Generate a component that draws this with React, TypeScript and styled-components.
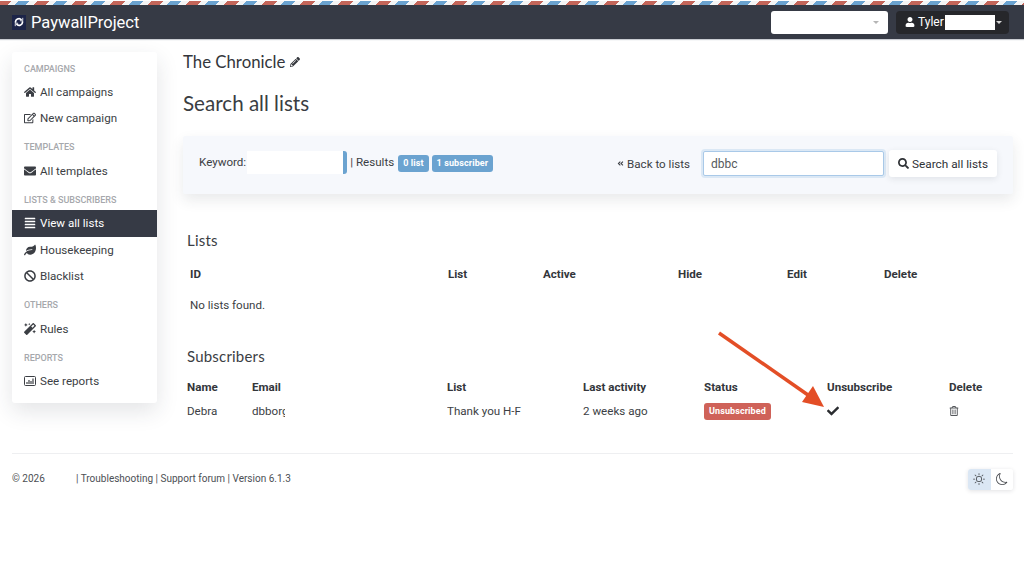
import React from "react";
import styled, { createGlobalStyle } from "styled-components";
import {
  FaHome, FaRegEdit, FaEnvelope, FaAlignJustify, FaLeaf, FaBan, FaMagic,
  FaPencilAlt, FaUser, FaSearch, FaAngleDoubleLeft, FaCheck, FaRegTrashAlt,
} from "react-icons/fa";
import { BsSun, BsMoon } from "react-icons/bs";

const Global = createGlobalStyle`
  html, body { margin: 0; padding: 0; background: #fff; }
  body { font-family: Roboto, "Liberation Sans", sans-serif; font-size: 11.6px; color: #3b3e44; }
`;
const Page = styled.div`
  position: relative; width: 1024px; height: 585px; overflow: hidden;
`;
const Stripe = styled.div`
  height: 4px; border-top: 1px solid #fff;
  background: repeating-linear-gradient(135deg, #c4665a 0 7.8px, #f4f4f4 7.8px 13.4px, #6ba3d0 13.4px 21.2px, #f4f4f4 21.2px 26.87px);
`;
const Header = styled.header`
  height: 34px; background: #363a45; display: flex; align-items: center;
  padding: 0 15px 0 12px; box-shadow: 0 1px 1px #c9ccd2;
`;
const Logo = styled.span`
  width: 14px; height: 15px; background: #1c2448; display: flex; align-items: center; justify-content: center; margin-right: 5px;
`;
const Brand = styled.span`
  color: #fff; font-size: 16.5px; flex: 1;
`;
const BrandSelect = styled.div`
  width: 117px; height: 23px; background: #fff; border-radius: 3px; display: flex; align-items: center; justify-content: flex-end; padding-right: 9px; box-sizing: border-box; margin-right: 8px;
`;
const Caret = styled.span<{ $c: string }>`
  width: 0; height: 0; border-left: 3.5px solid transparent; border-right: 3.5px solid transparent; border-top: 3.5px solid ${p => p.$c};
`;
const UserButton = styled.div`
  width: 113px; height: 23px; background: #26272b; border-radius: 4px; display: flex; align-items: center; padding-left: 9px; box-sizing: border-box; color: #fff; font-size: 12px; gap: 3px;
`;
const UserRedact = styled.span`
  width: 50px; height: 15px; background: #fff; margin-left: -2px; margin-right: -2px;
`;
const Main = styled.div`
  display: flex; align-items: flex-start; padding: 13px 11px 0 12px; gap: 26px; height: 414px; box-sizing: border-box;
`;
const Sidebar = styled.nav`
  width: 145px; flex: none; height: 351px; box-sizing: border-box; padding-top: 11px; background: #fff; border-radius: 3px; box-shadow: 0 8px 22px rgba(40,45,60,.13);
`;
const SideHead = styled.div`
  font-size: 9px; font-weight: 500; color: #a6a8ac; height: 12px; line-height: 12px; padding-left: 12px; margin: 0 0 4.25px; text-transform: uppercase;
  &:first-child { margin-bottom: 3.65px; }
  &:not(:first-child) { margin-top: 9.75px; }
`;
const SideItem = styled.div<{ $active?: boolean }>`
  height: 26.5px; display: flex; align-items: center; gap: 4px; padding-left: 12px; font-size: 11.6px;
  background: ${p => (p.$active ? "#363a45" : "transparent")};
  color: ${p => (p.$active ? "#fff" : "#3b3e44")};
  svg { width: 12px; height: 12px; flex: none; }
`;
const Content = styled.main`
  flex: 1; min-width: 0;
`;
const Title = styled.h1`
  margin: 0; font-family: Lato, sans-serif; font-weight: 400; font-size: 16.8px; line-height: 20px; display: flex; align-items: center; gap: 5px; color: #33363b;
  svg { width: 10px; height: 10px; }
`;
const PageTitle = styled.h2`
  margin: 19px 0 0; font-family: Lato, sans-serif; font-weight: 400; font-size: 20.6px; line-height: 24px; color: #3a3d42;
`;
const Panel = styled.section`
  margin-top: 21px; height: 58px; background: #f6f8fc; border-radius: 2px; box-shadow: 0 6px 14px rgba(40,45,60,.1); display: flex; align-items: center; padding: 0 16px 3px 16px; box-sizing: border-box;
`;
const Label = styled.span`
  font-size: 11.6px; white-space: nowrap; margin-bottom: 4px;
`;
const KeywordBlank = styled.span`
  position: relative; width: 100px; height: 23px; background: #6ba3d0; border-radius: 0 3px 3px 0; margin: 0 3px 2px 1px;
  &::before { content: ""; position: absolute; inset: 0 4px 0 0; background: #fff; }
`;
const Badge = styled.span<{ $c: string }>`
  display: inline-block; background: ${p => p.$c}; color: #fff; font-size: 9px; font-weight: 700; letter-spacing: .1px; line-height: 17px; height: 17px; padding: 0 5px; border-radius: 3px; white-space: nowrap;
`;
const BadgeGroup = styled.span`
  display: flex; gap: 3px; margin-left: 4px; flex: 1;
`;
const BackLink = styled.span`
  display: flex; align-items: center; font-size: 11.6px; gap: 3px; margin-right: 13px;
  svg { width: 7px; height: 7px; }
`;
const SearchInput = styled.div`
  width: 181px; height: 25px; background: #fff; border: 1px solid #a9c9e8; box-shadow: 0 0 0 2px #dbe8f5; border-radius: 2px; box-sizing: border-box; padding-left: 7px; line-height: 24px; color: #55585c; font-size: 12px; margin-right: 5px;
`;
const SearchButton = styled.div`
  width: 108px; height: 27px; background: #fff; border-radius: 3px; box-shadow: 0 2px 6px rgba(40,45,60,.1); display: flex; align-items: center; justify-content: center; gap: 3px; font-size: 11.8px; color: #2f3236;
  svg { width: 11px; height: 11px; }
`;
const Section = styled.h3`
  font-family: Lato, sans-serif; font-weight: 400; font-size: 15px; letter-spacing: .2px; line-height: 18px; margin: 0; padding-left: 4px; color: #3b3e44;
`;
const Row = styled.div<{ $cols: string; $h: number }>`
  display: grid; grid-template-columns: ${p => p.$cols}; height: ${p => p.$h}px; align-items: center; font-size: 11.6px; color: #3b3e44;
`;
const ListsWrap = styled.div`
  margin-top: 37px;
`;
const ListsHeadRow = styled.div`
  margin-top: 12px; padding-left: 7px;
`;
const SubsWrap = styled.div`
  margin-top: 24px;
`;
const SubsRows = styled.div`
  margin-top: 9px; padding-left: 4px;
`;
const HeadCell = styled.span`
  font-weight: 700; color: #33363b;
`;
const Clip = styled.span<{ $w: number }>`
  display: block; overflow: hidden; white-space: nowrap; width: ${p => p.$w}px;
`;
const StatusCell = styled.span`
  display: flex;
`;
const IconCell = styled.span`
  display: flex; align-items: center; color: #2a2c30;
`;
const TrashCell = styled(IconCell)`
  color: #55585c;
`;
const Footer = styled.footer`
  margin: 0 11px 0 12px; border-top: 1px solid #eeeff1; height: 50px; display: flex; align-items: center; justify-content: space-between; font-size: 10px; color: #4c4f54;
`;
const FootText = styled.span`
  margin-bottom: 2px;
`;
const FootYear = styled.span`
  display: inline-block; width: 64px;
`;
const Toggle = styled.div`
  display: flex; border-radius: 3px; box-shadow: 0 1px 4px rgba(40,45,60,.14); overflow: hidden;
`;
const ToggleBtn = styled.span<{ $on?: boolean }>`
  width: 22.5px; height: 21px; display: flex; align-items: center; justify-content: center; background: ${p => (p.$on ? "#dbe7f4" : "#fff")}; color: #44474c;
  svg { width: 12px; height: 12px; }
`;
const Arrow = styled.svg`
  position: absolute; left: 710px; top: 325px; width: 135px; height: 95px;
`;

const LIST_COLS = "258px 95px 135px 109px 97px 1fr";
const SUB_COLS = "65px 195px 136px 121px 123px 122px 1fr";

export default function App() {
  return (
    <Page>
      <Global />
      <Stripe />
      <Header>
        <Logo>
          <svg width="10" height="10" viewBox="0 0 12 12" fill="none" stroke="#fff" strokeWidth="2">
            <path d="M2 7a4 4 0 0 1 7-3.5" />
            <path d="M10 5a4 4 0 0 1-7 3.5" />
            <path d="M10.5 1v3.5H7M1.5 11V7.5H5" strokeWidth="1" />
          </svg>
        </Logo>
        <Brand>PaywallProject</Brand>
        <BrandSelect><Caret $c="#b5b5b5" /></BrandSelect>
        <UserButton>
          <FaUser size={10} />
          Tyler
          <UserRedact />
          <Caret $c="#d8d8d8" />
        </UserButton>
      </Header>
      <Main>
        <Sidebar>
          <SideHead>Campaigns</SideHead>
          <SideItem><FaHome />All campaigns</SideItem>
          <SideItem><FaRegEdit />New campaign</SideItem>
          <SideHead>Templates</SideHead>
          <SideItem><FaEnvelope />All templates</SideItem>
          <SideHead>Lists &amp; subscribers</SideHead>
          <SideItem $active><FaAlignJustify />View all lists</SideItem>
          <SideItem><FaLeaf />Housekeeping</SideItem>
          <SideItem><FaBan />Blacklist</SideItem>
          <SideHead>Others</SideHead>
          <SideItem><FaMagic />Rules</SideItem>
          <SideHead>Reports</SideHead>
          <SideItem>
            <svg viewBox="0 0 12 12" fill="none" stroke="currentColor">
              <rect x="0.5" y="1.5" width="11" height="9" rx="1" />
              <path d="M3 9V7M5 9V5M7 9V6M9 9V3.5" strokeWidth="1.2" />
            </svg>
            See reports
          </SideItem>
        </Sidebar>
        <Content>
          <Title>The Chronicle <FaPencilAlt /></Title>
          <PageTitle>Search all lists</PageTitle>
          <Panel>
            <Label>Keyword:</Label>
            <KeywordBlank />
            <Label>| Results</Label>
            <BadgeGroup>
              <Badge $c="#6ba3d0">0 list</Badge>
              <Badge $c="#6ba3d0">1 subscriber</Badge>
            </BadgeGroup>
            <BackLink><FaAngleDoubleLeft />Back to lists</BackLink>
            <SearchInput>dbbc</SearchInput>
            <SearchButton><FaSearch />Search all lists</SearchButton>
          </Panel>
          <ListsWrap>
            <Section>Lists</Section>
            <ListsHeadRow>
              <Row $cols={LIST_COLS} $h={26}>
                <HeadCell>ID</HeadCell><HeadCell>List</HeadCell><HeadCell>Active</HeadCell>
                <HeadCell>Hide</HeadCell><HeadCell>Edit</HeadCell><HeadCell>Delete</HeadCell>
              </Row>
              <Row $cols="1fr" $h={36}><span>No lists found.</span></Row>
            </ListsHeadRow>
          </ListsWrap>
          <SubsWrap>
            <Section>Subscribers</Section>
            <SubsRows>
              <Row $cols={SUB_COLS} $h={26}>
                <HeadCell>Name</HeadCell><HeadCell>Email</HeadCell><HeadCell>List</HeadCell>
                <HeadCell>Last activity</HeadCell><HeadCell>Status</HeadCell>
                <HeadCell>Unsubscribe</HeadCell><HeadCell>Delete</HeadCell>
              </Row>
              <Row $cols={SUB_COLS} $h={22}>
                <span>Debra</span>
                <Clip $w={33}>dbborg</Clip>
                <Clip $w={78}>Thank you H-F</Clip>
                <span>2 weeks ago</span>
                <StatusCell><Badge $c="#cf6259">Unsubscribed</Badge></StatusCell>
                <IconCell><FaCheck size={12} /></IconCell>
                <TrashCell><FaRegTrashAlt size={10} /></TrashCell>
              </Row>
            </SubsRows>
          </SubsWrap>
        </Content>
      </Main>
      <Footer>
        <FootText><FootYear>© 2026</FootYear>| Troubleshooting | Support forum | Version 6.1.3</FootText>
        <Toggle>
          <ToggleBtn $on><BsSun /></ToggleBtn>
          <ToggleBtn><BsMoon /></ToggleBtn>
        </Toggle>
      </Footer>
      <Arrow viewBox="0 0 135 95">
        <path d="M9 8 L98 70" stroke="#e34e26" strokeWidth="3.5" fill="none" />
        <polygon points="114,82 103,61 92,77" fill="#e34e26" />
      </Arrow>
    </Page>
  );
}
